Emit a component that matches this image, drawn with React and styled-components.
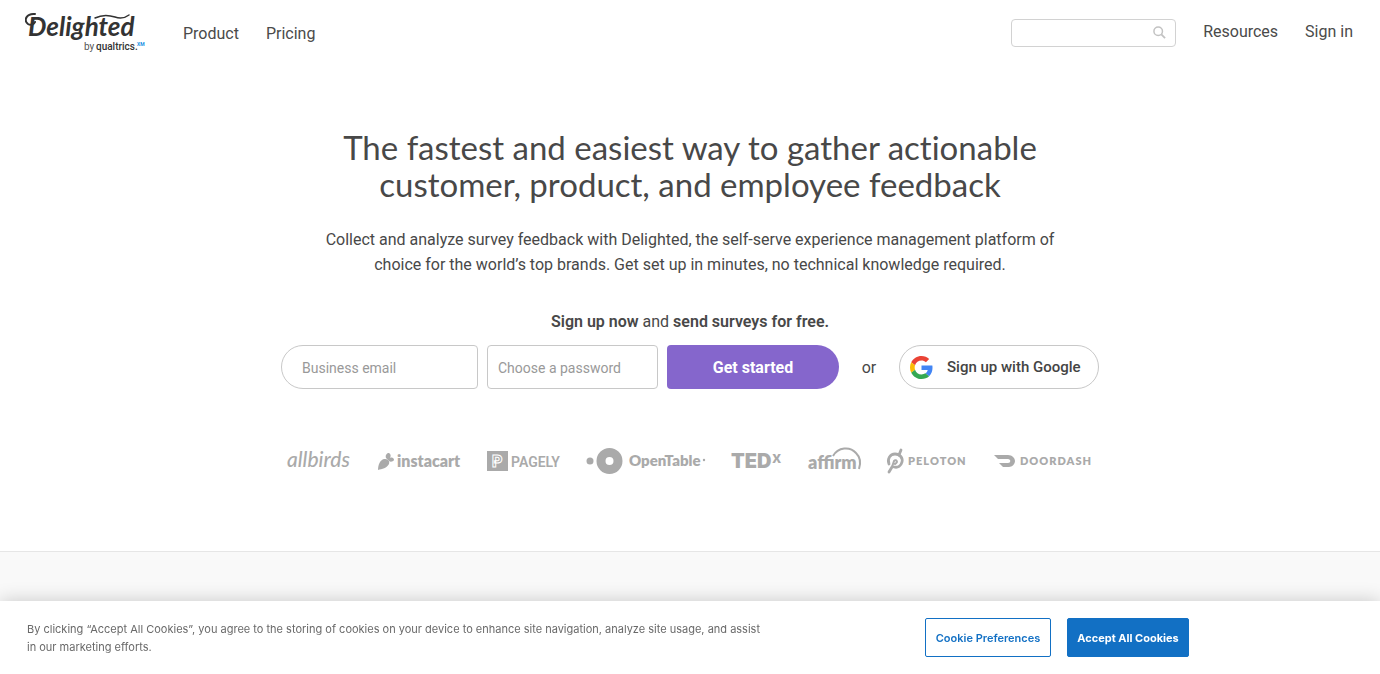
import React from "react";
import styled, { createGlobalStyle } from "styled-components";

const GlobalStyle = createGlobalStyle`
  *, *::before, *::after { box-sizing: border-box; }
  body {
    margin: 0;
    background: #fff;
    color: #484848;
    font-family: Roboto, "Liberation Sans", sans-serif;
    font-size: 16px;
  }
  button, input { font-family: inherit; }
`;

const Page = styled.div`
  display: flex;
  flex-direction: column;
  min-height: 100vh;
`;

const Header = styled.header`
  display: flex;
  align-items: flex-start;
  justify-content: space-between;
  padding: 9px 27px 0 25px;
  height: 66px;
`;

const HeaderGroup = styled.div`
  display: flex;
  align-items: flex-start;
  gap: 27px;
`;

const LogoLink = styled.a`
  display: block;
  width: 131px;
  line-height: 0;
`;

const Nav = styled.nav`
  display: flex;
  gap: 27px;
  padding-top: ${(p) => p.$top}px;
`;

const NavLink = styled.a`
  color: #4a4a4a;
  font-size: 16px;
  line-height: 20px;
  text-decoration: none;
`;

const SearchBox = styled.label`
  display: flex;
  align-items: center;
  width: 165px;
  height: 28px;
  margin-top: 10px;
  padding: 0 9px 2px;
  border: 1px solid #d2d2d2;
  border-radius: 4px;
`;

const SearchInput = styled.input`
  flex: 1;
  min-width: 0;
  border: 0;
  outline: 0;
  background: transparent;
  font-size: 14px;
`;

const Hero = styled.main`
  display: flex;
  flex-direction: column;
  align-items: center;
  padding: 63px 20px 75px;
  text-align: center;
`;

const Title = styled.h1`
  max-width: 740px;
  margin: 0;
  color: #484848;
  font-family: Lato, "Liberation Sans", sans-serif;
  font-size: 33px;
  font-weight: 400;
  font-variant-ligatures: none;
  line-height: 37px;
`;

const Lead = styled.p`
  max-width: 750px;
  margin: 24px 0 0;
  line-height: 25px;
`;

const SignupNote = styled.p`
  margin: 35px 0 0;
  line-height: 20px;

  strong { font-weight: 600; }
`;

const SignupForm = styled.form`
  display: flex;
  align-items: center;
  width: 100%;
  max-width: 818px;
  margin-top: 13px;
`;

const Field = styled.input`
  width: ${(p) => p.$width}px;
  height: 44px;
  margin-right: 9px;
  padding: 2px 10px 0 ${(p) => (p.$round ? 20 : 10)}px;
  border: 1px solid #c8c8c8;
  border-radius: ${(p) => (p.$round ? "22px 4px 4px 22px" : "4px")};
  background: #fff;
  font-size: 14px;

  &::placeholder { color: #999; opacity: 1; }
`;

const SubmitButton = styled.button`
  width: 172px;
  height: 44px;
  border: 0;
  border-radius: 4px 22px 22px 4px;
  background: #8566cc;
  color: #fff;
  font-size: 16px;
  font-weight: 700;
`;

const Or = styled.span`
  flex: 1;
  text-align: center;
`;

const GoogleButton = styled.button`
  display: flex;
  align-items: center;
  gap: 14px;
  width: 200px;
  height: 44px;
  padding: 0 10px;
  border: 1px solid #c8c8c8;
  border-radius: 22px;
  background: #fff;
  color: #444;
  font-size: 15px;
  font-weight: 500;
`;

const Brands = styled.ul`
  display: flex;
  align-items: center;
  justify-content: space-between;
  width: 100%;
  max-width: 806px;
  height: 30px;
  margin: 57px 0 0;
  padding: 0;
  list-style: none;
`;

const Brand = styled.li`
  width: ${(p) => p.$width}px;
  height: 30px;

  svg { display: block; }
`;

const NextSection = styled.section`
  flex: 1;
  min-height: 123px;
  border-top: 1px solid #e6e6e6;
  background: #f9f9f9;
`;

const CookieBar = styled.aside`
  position: fixed;
  right: 0;
  bottom: 0;
  left: 0;
  display: flex;
  align-items: flex-start;
  padding: 17px 27px;
  background: #fff;
  box-shadow: 0 0 18px rgba(0, 0, 0, 0.2);
  font-family: Inter, "Liberation Sans", sans-serif;
`;

const CookieText = styled.p`
  flex: 0 1 740px;
  margin: 2px 0 0;
  color: #696969;
  font-size: 11px;
  line-height: 18px;
`;

const CookieActions = styled.div`
  display: flex;
  flex: none;
  gap: 16px;
  margin-left: 158px;
`;

const CookieButton = styled.button`
  width: ${(p) => p.$width}px;
  height: 39px;
  padding: 0;
  border: 1px solid #1270c4;
  border-radius: 2px;
  background: ${(p) => (p.$primary ? "#1270c4" : "#fff")};
  color: ${(p) => (p.$primary ? "#fff" : "#1270c4")};
  font-size: 11px;
  font-weight: ${(p) => (p.$primary ? 700 : 600)};
`;

const DelightedLogo = () => (
  <svg width="131" height="48" viewBox="0 0 131 48" role="img" aria-label="Delighted by Qualtrics XM">
    <text x="3" y="27" fontFamily="Lato" fontSize="26" fontWeight="700" fontStyle="italic" fill="#333">Delighted</text>
    <g fill="none" stroke="#333" strokeLinecap="round">
      <path d="M10 5C2 4-2 11 3 15c3 2 6 0 7-2" strokeWidth="2" />
      <path d="M70 9c6-3 14-3 20-1 5 2 10 1 14-2" strokeWidth="1.5" />
    </g>
    <text x="59" y="41" fontFamily="Roboto" fontSize="10" fill="#555">by</text>
    <text x="71" y="41" fontFamily="Roboto" fontSize="10" fontWeight="500" fill="#333">qualtrics.</text>
    <text x="112" y="37" fontFamily="Roboto" fontSize="5" fontWeight="700" fill="#1a8fe3">XM</text>
  </svg>
);

const SearchIcon = () => (
  <svg width="13" height="13" viewBox="0 0 14 14" fill="none" stroke="#c2c2c2" strokeWidth="1.6" aria-hidden="true">
    <circle cx="5.6" cy="5.6" r="4.6" />
    <path d="M9 9l4 4" strokeWidth="1.9" />
  </svg>
);

const GoogleIcon = () => (
  <svg width="23" height="23" viewBox="0 0 48 48" aria-hidden="true">
    <path fill="#EA4335" d="M24 9.5c3.54 0 6.71 1.22 9.21 3.6l6.85-6.85C35.9 2.38 30.47 0 24 0 14.62 0 6.51 5.38 2.56 13.22l7.98 6.19C12.43 13.72 17.74 9.5 24 9.5z" />
    <path fill="#4285F4" d="M46.98 24.55c0-1.57-.15-3.09-.38-4.55H24v9.02h12.94c-.58 2.96-2.26 5.48-4.78 7.18l7.73 6c4.51-4.18 7.09-10.36 7.09-17.65z" />
    <path fill="#FBBC05" d="M10.53 28.59c-.48-1.45-.76-2.99-.76-4.59s.27-3.14.76-4.59l-7.98-6.19C.92 16.46 0 20.12 0 24c0 3.88.92 7.54 2.56 10.78l7.97-6.19z" />
    <path fill="#34A853" d="M24 48c6.48 0 11.93-2.13 15.89-5.81l-7.73-6c-2.15 1.45-4.92 2.3-8.16 2.3-6.26 0-11.57-4.22-13.47-9.91l-7.98 6.19C6.51 42.62 14.62 48 24 48z" />
  </svg>
);

const Mark = ({ width, label, children }) => (
  <Brand $width={width}>
    <svg width={width} height="30" viewBox={`0 0 ${width} 30`} fill="#aaa" role="img" aria-label={label} overflow="visible">
      {children}
    </svg>
  </Brand>
);

const BrandRow = () => (
  <Brands>
    <Mark width={65} label="allbirds">
      <text x="0" y="21" fontFamily="Lato" fontSize="21" fontWeight="500" fontStyle="italic">allbirds</text>
    </Mark>
    <Mark width={84} label="instacart">
      <path d="M0 24c0-5 2-10 6-11 4 0 6 2 5 5-2 4-7 5-11 6z" />
      <path d="M8 12c-1-3 1-5 3-5 2 1 2 3 1 5 2-1 4 0 4 2-1 2-4 2-5 1z" />
      <text x="19" y="21" fontFamily="Lato" fontSize="16" fontWeight="800">instacart</text>
    </Mark>
    <Mark width={73} label="Pagely">
      <rect y="5" width="21" height="20" />
      <text x="5" y="21" fontFamily="Roboto" fontSize="16" fontWeight="900" fill="none" stroke="#fff" strokeWidth="1">P</text>
      <text x="24" y="21" fontFamily="Roboto" fontSize="14" fontWeight="600">PAGELY</text>
    </Mark>
    <Mark width={119} label="OpenTable">
      <circle cx="4" cy="15" r="3.5" />
      <circle cx="23.500" cy="15" r="8.500" fill="none" stroke="#aaa" strokeWidth="9" />
      <text x="43" y="20" fontFamily="Lato" fontSize="15" fontWeight="800">OpenTable</text>
      <circle cx="118" cy="14" r="1.200" />
    </Mark>
    <Mark width={51} label="TEDx">
      <text x="0" y="22" fontFamily="Inter" fontSize="20" fontWeight="900">TED</text>
      <text x="41" y="17" fontFamily="Inter" fontSize="16" fontWeight="700">x</text>
    </Mark>
    <Mark width={54} label="affirm">
      <text x="0" y="23" fontFamily="Lato" fontSize="18" fontWeight="800">affirm</text>
      <path d="M25 10C30 1 42 0 48 7c4 4 5 10 3 16" fill="none" stroke="#aaa" strokeWidth="2" />
    </Mark>
    <Mark width={81} label="Peloton">
      <g fill="none" stroke="#aaa" strokeWidth="2.800" strokeLinecap="round">
        <path d="M2 18C0 13 3 8 8 8c5 0 8 4 7 8s-4 6-8 5" />
        <path d="M12 9l2-5M2 26l3-5" />
        <path d="M5 21l2-6c2-2 5 1 1 3" strokeWidth="2" />
      </g>
      <text x="21" y="19" fontFamily="Lato" fontSize="11" fontWeight="800" letterSpacing="1">PELOTON</text>
    </Mark>
    <Mark width={99} label="DoorDash">
      <path d="M0 9h14c4 0 7 3 7 6s-3 6-6 6H9l-4-4h9c3 0 3-4 0-4H4z" />
      <text x="26" y="19" fontFamily="Lato" fontSize="11" fontWeight="800" letterSpacing="1">DOORDASH</text>
    </Mark>
  </Brands>
);

export default function App() {
  return (
    <Page>
      <GlobalStyle />
      <Header>
        <HeaderGroup>
          <LogoLink href="#"><DelightedLogo /></LogoLink>
          <Nav $top={15} aria-label="Main">
            <NavLink href="#product">Product</NavLink>
            <NavLink href="#pricing">Pricing</NavLink>
          </Nav>
        </HeaderGroup>
        <HeaderGroup>
          <SearchBox>
            <SearchInput type="text" aria-label="Search" />
            <SearchIcon />
          </SearchBox>
          <Nav $top={13} aria-label="Account">
            <NavLink href="#resources">Resources</NavLink>
            <NavLink href="#signin">Sign in</NavLink>
          </Nav>
        </HeaderGroup>
      </Header>
      <Hero>
        <Title>The fastest and easiest way to gather actionable customer, product, and employee feedback</Title>
        <Lead>
          Collect and analyze survey feedback with Delighted, the self-serve experience management platform of
          choice for the world’s top brands. Get set up in minutes, no technical knowledge required.
        </Lead>
        <SignupNote><strong>Sign up now</strong> and <strong>send surveys for free.</strong></SignupNote>
        <SignupForm onSubmit={(e) => e.preventDefault()}>
          <Field $width={197} $round type="email" placeholder="Business email" aria-label="Business email" />
          <Field $width={171} type="password" placeholder="Choose a password" aria-label="Choose a password" />
          <SubmitButton type="submit">Get started</SubmitButton>
          <Or>or</Or>
          <GoogleButton type="button"><GoogleIcon />Sign up with Google</GoogleButton>
        </SignupForm>
        <BrandRow />
      </Hero>
      <NextSection />
      <CookieBar aria-label="Cookie notice">
        <CookieText>
          By clicking “Accept All Cookies”, you agree to the storing of cookies on your device to enhance site
          navigation, analyze site usage, and assist in our marketing efforts.
        </CookieText>
        <CookieActions>
          <CookieButton type="button" $width={126}>Cookie Preferences</CookieButton>
          <CookieButton type="button" $width={122} $primary>Accept All Cookies</CookieButton>
        </CookieActions>
      </CookieBar>
    </Page>
  );
}
